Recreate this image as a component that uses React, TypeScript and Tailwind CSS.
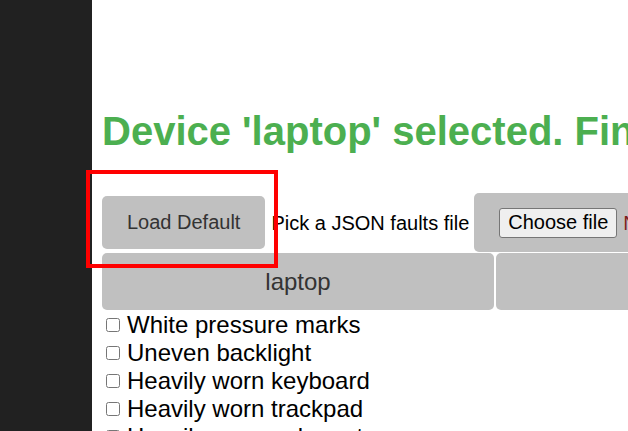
const FAULTS = [
  "White pressure marks",
  "Uneven backlight",
  "Heavily worn keyboard",
  "Heavily worn trackpad",
  "Heavily worn palmrest",
  "Scratched lid",
];

const DEVICES = ["laptop", "phone"];

export default function App() {
  return (
    <div className="relative flex h-[431px] w-[628px] overflow-hidden bg-white font-['Liberation_Sans',Arial,sans-serif] text-[20px] text-black">
      {/* Sidebar */}
      <aside className="w-[92px] shrink-0 bg-[#212121]" />

      {/* Main */}
      <main className="min-w-0 flex-1 pl-[10px]">
        <h1 className="mt-[108px] whitespace-nowrap text-[40px] font-bold leading-[46px] text-[#4CAF50]">
          Device 'laptop' selected. Find the faults below.
        </h1>

        <div className="mt-[39px] flex h-[59px] items-center whitespace-nowrap">
          <button className="h-[53px] shrink-0 rounded-[5px] bg-[#C0C0C0] px-[25px] text-[20px] leading-[23px] text-[#333]">
            Load Default
          </button>
          <span className="ml-[6px] shrink-0">Pick a JSON faults file</span>
          <label className="ml-[5px] flex h-[59px] shrink-0 items-center rounded-[5px] bg-[#C0C0C0] px-[25px]">
            <span className="flex h-[30px] items-center rounded-[3px] border border-[#767676] bg-[#efefef] px-[8px] leading-[23px]">
              Choose file
            </span>
            <span className="ml-[6px] text-[#7f1d1d]">No file chosen</span>
          </label>
        </div>

        <div className="mt-[1px] flex gap-[2px]">
          {DEVICES.map((d) => (
            <button
              key={d}
              className="h-[57px] w-[392px] shrink-0 rounded-[5px] bg-[#C0C0C0] text-[24px] leading-[27px] text-[#333]"
            >
              {d}
            </button>
          ))}
        </div>

        <ul className="mt-[1px]">
          {FAULTS.map((f) => (
            <li key={f} className="flex h-[28px] items-center whitespace-nowrap text-[24px] leading-[28px]">
              <input type="checkbox" className="ml-[4px] mr-[7px] h-[14px] w-[14px]" />
              {f}
            </li>
          ))}
        </ul>
      </main>

      {/* Annotation box */}
      <div className="absolute left-[86px] top-[170px] h-[98px] w-[192px] border-4 border-[#ff0000]" />
    </div>
  );
}
